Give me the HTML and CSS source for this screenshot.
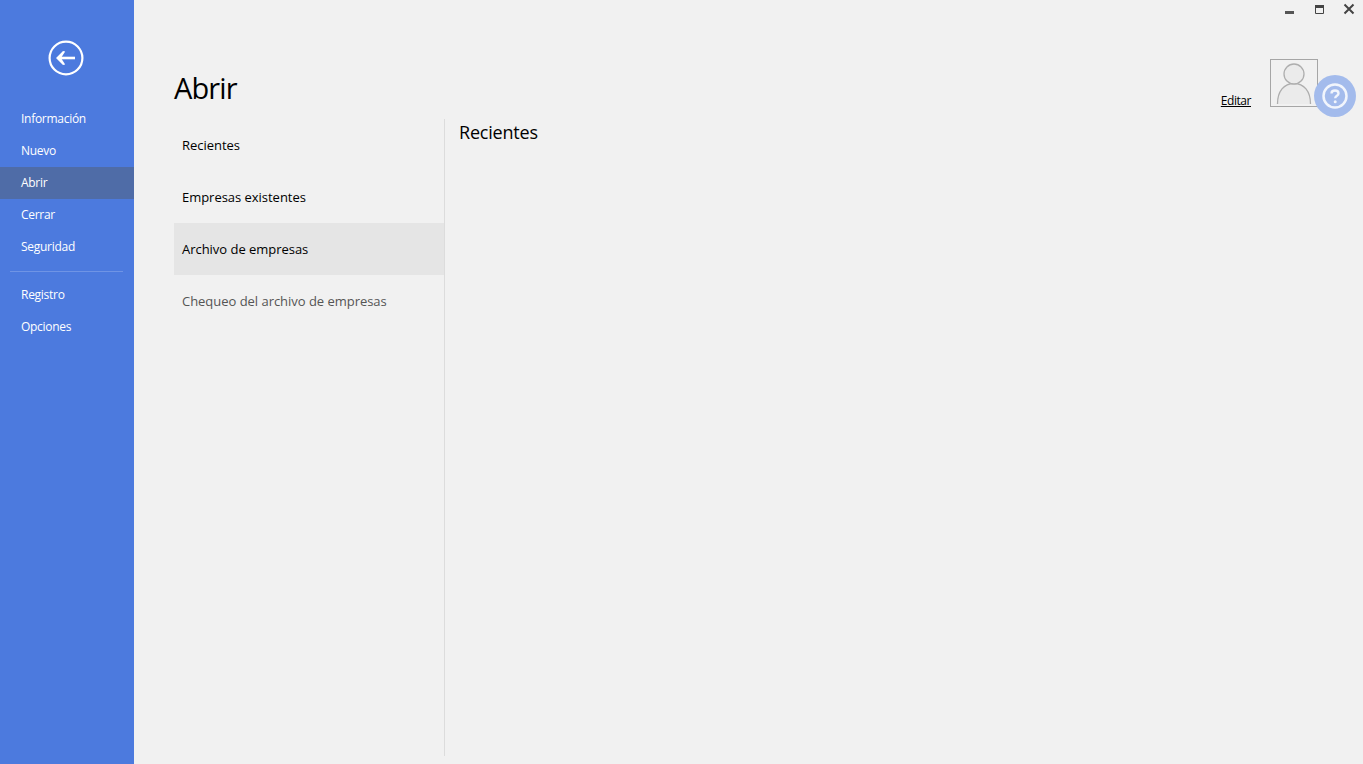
FILE: index.html
```html
<!DOCTYPE html>
<html lang="es">
<head>
<meta charset="utf-8">
<title>Abrir</title>
<link rel="stylesheet" href="styles.css">
</head>
<body>
<div class="app">
  <nav class="sidebar">
    <div class="back">
      <svg width="36" height="36" viewBox="0 0 36 36" aria-hidden="true">
        <circle cx="18" cy="18" r="16.4" fill="none" stroke="#fff" stroke-width="2.200"/>
        <path d="M27 18H12" fill="none" stroke="#fff" stroke-width="2.600"/>
        <path d="M8 18L15 11L17.200 11.600L13 18L17.200 24.400L15 25Z" fill="#fff"/>
      </svg>
    </div>
    <ul class="side-list">
      <li class="side-item">Información</li>
      <li class="side-item">Nuevo</li>
      <li class="side-item is-active">Abrir</li>
      <li class="side-item">Cerrar</li>
      <li class="side-item">Seguridad</li>
    </ul>
    <div class="side-rule"></div>
    <ul class="side-list">
      <li class="side-item">Registro</li>
      <li class="side-item">Opciones</li>
    </ul>
  </nav>
  <main class="main">
    <div class="winbar">
      <svg class="win-icon" width="12" height="12" viewBox="0 0 12 12" aria-hidden="true"><rect x="2" y="8" width="9" height="3" fill="#555"/></svg>
      <svg class="win-icon" width="12" height="12" viewBox="0 0 12 12" aria-hidden="true"><path d="M2.500 2.500H10.500V10.500H2.500Z" fill="none" stroke="#444"/><rect x="2" y="2" width="9" height="3" fill="#444"/></svg>
      <svg class="win-icon" width="12" height="12" viewBox="0 0 12 12" aria-hidden="true"><path d="M1.500 1.500L10.500 10.500M10.500 1.500L1.500 10.500" fill="none" stroke="#444" stroke-width="2"/></svg>
    </div>
    <h1 class="title">Abrir</h1>
    <div class="columns">
      <ul class="tabs">
        <li class="tab">Recientes</li>
        <li class="tab">Empresas existentes</li>
        <li class="tab is-selected">Archivo de empresas</li>
        <li class="tab is-muted">Chequeo del archivo de empresas</li>
      </ul>
      <section class="pane">
        <h2 class="pane-title">Recientes</h2>
      </section>
    </div>
    <div class="account">
      <a class="edit" href="#">Editar</a>
      <div class="avatar">
        <svg width="46" height="46" viewBox="0 0 46 46" aria-hidden="true">
          <path d="M6.500 44C6.500 31 13 23.500 23 23.500C33 23.500 39.500 31 39.500 44Z" fill="#ebebeb"/>
          <path d="M6.500 44C6.500 31 13 23.500 23 23.500C33 23.500 39.500 31 39.500 44" fill="none" stroke="#aeaeae" stroke-width="1.300"/>
          <circle cx="23" cy="14" r="10" fill="#ebebeb" stroke="#aeaeae" stroke-width="1.300"/>
        </svg>
      </div>
      <div class="help">
        <svg width="28" height="28" viewBox="0 0 28 28" aria-hidden="true">
          <circle cx="14" cy="14" r="11.500" fill="none" stroke="#fff" stroke-opacity=".85" stroke-width="2.500"/>
          <path d="M10.500 11.500C10.500 9.500 12 8.500 14 8.500C16 8.500 17.500 9.700 17.500 11.400C17.500 13.800 14.200 13.800 14.200 16.300" fill="none" stroke="#fff" stroke-opacity=".85" stroke-width="2.400"/>
          <circle cx="14.200" cy="19.800" r="1.500" fill="#fff" fill-opacity=".85"/>
        </svg>
      </div>
    </div>
  </main>
</div>
</body>
</html>
```
FILE: styles.css
```css
* { box-sizing: border-box; }
html, body { margin: 0; height: 100%; }
body {
  background: #f1f1f1;
  font-family: "Open Sans", "Noto Sans", sans-serif;
  color: #000;
  overflow: hidden;
}
ul { list-style: none; margin: 0; padding: 0; }
.app { display: flex; height: 764px; }
.sidebar { width: 134px; flex: none; background: #4c7ade; color: #fff; padding-top: 40px; }
.back { height: 63px; display: flex; justify-content: center; padding-right: 3px; }
.side-item {
  height: 32px;
  line-height: 32px;
  padding-left: 21px;
  font-size: 12px;
  letter-spacing: -0.28px;
}
.side-item.is-active { background: #4f6ca7; }
.side-rule { height: 1px; background: #6f94e5; margin: 8px 11px 7px 10px; }
.main { position: relative; flex: 1; padding: 0 8px 8px 40px; display: flex; flex-direction: column; }
.winbar { position: absolute; top: 3px; right: 8px; display: flex; gap: 18px; }
.win-icon { display: block; }
.title { margin: 68px 0 0; height: 51px; font-size: 29px; line-height: 40px; font-weight: 400; letter-spacing: -0.9px; }
.columns { flex: 1; display: flex; }
.tabs { width: 271px; flex: none; border-right: 1px solid #dcdcdc; }
.tab { height: 52px; line-height: 52px; padding-left: 8px; font-size: 13px; letter-spacing: -0.03px; }
.tab.is-selected { background: #e5e5e5; }
.tab.is-muted { color: #555; }
.pane { flex: 1; padding-left: 14px; }
.pane-title { margin: 0; font-size: 18px; line-height: 27px; font-weight: 400; letter-spacing: -0.2px; }
.account { position: absolute; top: 59px; right: 7px; display: flex; align-items: flex-start; }
.edit { margin: 33px 19px 0 0; font-size: 12px; line-height: 18px; color: #000; letter-spacing: -0.45px; }
.avatar { width: 48px; height: 48px; border: 1px solid #a6a6a6; background: #f1f1f1; overflow: hidden; }
.avatar svg { display: block; }
.help {
  width: 42px; height: 42px; margin: 16px 0 0 -4px; border-radius: 50%;
  background: #a3bbec; display: flex; align-items: center; justify-content: center;
}
```
